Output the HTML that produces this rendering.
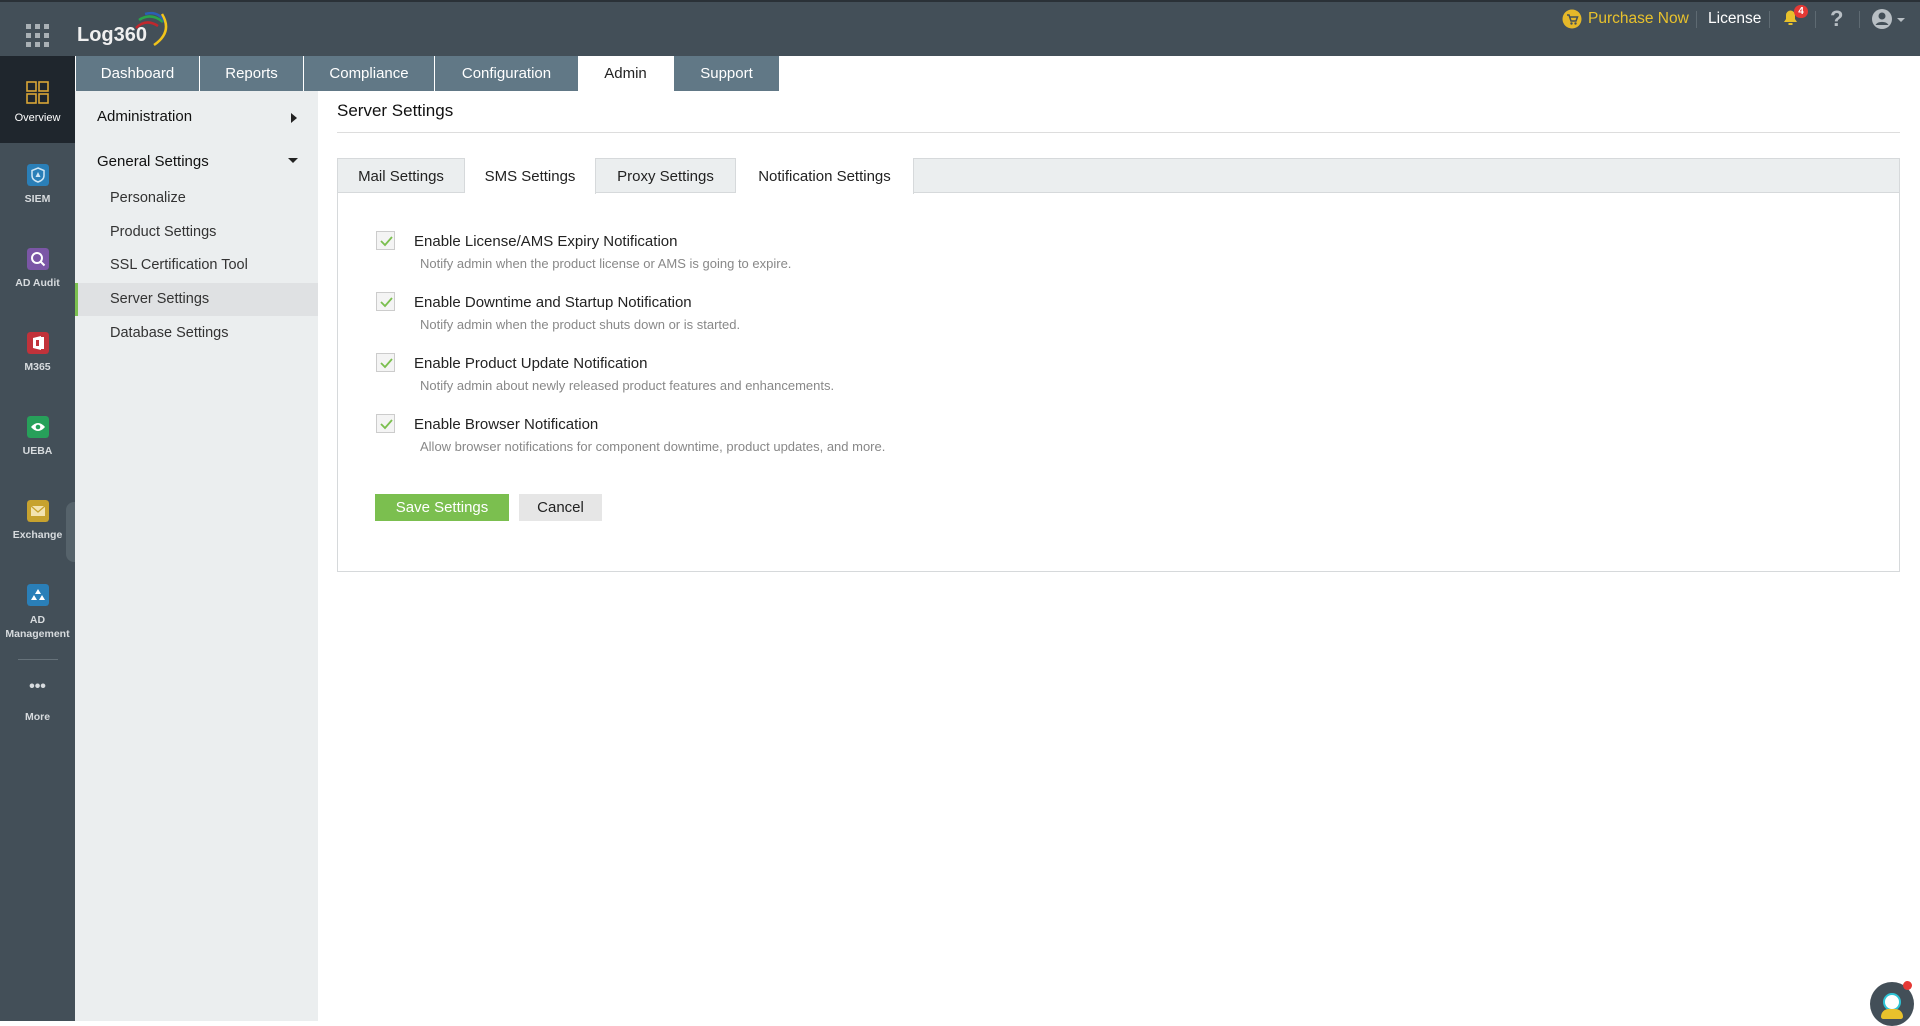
<!DOCTYPE html>
<html><head><meta charset="utf-8"><style>
*{box-sizing:border-box;margin:0;padding:0}
body{width:1920px;height:1021px;overflow:hidden;background:#fff;font-family:"Liberation Sans",sans-serif;position:relative}
.abs{position:absolute}
#hdr{left:0;top:0;width:1920px;height:56px;background:#434f58;border-top:2px solid #2a3137}
#rail{left:0;top:56px;width:75px;height:965px;background:#434f58}
#ov{left:0;top:56px;width:75px;height:87px;background:#1f262d}
.ri{position:absolute;left:0;width:75px;text-align:center;color:#d7dbde;font-size:10.5px;font-weight:bold}
.ri .ic{width:22px;height:22px;border-radius:3px;margin:0 auto 7px;display:block}
.tab{position:absolute;top:56px;height:35px;background:#617886;color:#fff;font-size:15px;line-height:35px;text-align:center}
#side{left:75px;top:91px;width:243px;height:930px;background:#ebeeef}
.sm{position:absolute;left:22px;font-size:15px;color:#111}
.ss{position:absolute;left:35px;font-size:14.5px;color:#333}
.ctab{position:absolute;top:158px;height:35px;font-size:15px;line-height:37px;text-align:center;color:#222;border-right:1px solid #d6d9db}
.cb{position:absolute;left:376px;width:19px;height:19px;border:1px solid #ccc;background:#f4f4f4}
.lbl{position:absolute;left:414px;font-size:15px;color:#222}
.dsc{position:absolute;left:420px;font-size:13px;color:#888}
</style></head><body>
<div id="hdr" class="abs"></div>
<svg class="abs" style="left:26px;top:24px" width="23" height="23"><g fill="#a9b0b5"><rect x="0" y="0" width="5" height="5"/><rect x="9" y="0" width="5" height="5"/><rect x="18" y="0" width="5" height="5"/><rect x="0" y="9" width="5" height="5"/><rect x="9" y="9" width="5" height="5"/><rect x="18" y="9" width="5" height="5"/><rect x="0" y="18" width="5" height="5"/><rect x="9" y="18" width="5" height="5"/><rect x="18" y="18" width="5" height="5"/></g></svg>
<div class="abs" style="left:77px;top:24px;color:#f0f0f0;font-size:20px;font-weight:bold">Log360</div>
<svg class="abs" style="left:130px;top:10px" width="42" height="38" fill="none" stroke-width="2.5"><path d="M6 18 Q16 8 28 16" stroke="#c0272d"/><path d="M9 10 Q21 2 33 12" stroke="#2aa34a"/><path d="M15 4 Q29 0 36 14" stroke="#2b5fb5"/><path d="M32 4 Q43 22 24 35" stroke="#f2c41a"/></svg>
<svg class="abs" style="left:1562px;top:9px" width="20" height="20"><circle cx="10" cy="10" r="9.5" fill="#e5b829"/><path d="M5 6h2l2 6h5l1.5-4H8" stroke="#434f58" stroke-width="1.5" fill="none"/><circle cx="9.5" cy="14.5" r="1.2" fill="#434f58"/><circle cx="13.5" cy="14.5" r="1.2" fill="#434f58"/></svg>
<div class="abs" style="left:1588px;top:10px;color:#e8c12c;font-size:15.5px">Purchase Now</div>
<div class="abs" style="left:1696px;top:11px;width:1px;height:17px;background:#5e6a72"></div>
<div class="abs" style="left:1708px;top:10px;color:#fff;font-size:15.5px">License</div>
<div class="abs" style="left:1769px;top:11px;width:1px;height:17px;background:#5e6a72"></div>
<svg class="abs" style="left:1781px;top:7px" width="22" height="20"><path d="M3 15h13l-2-3V8a4.5 4.5 0 0 0-9 0v4z" fill="#e8c12c"/><rect x="7.5" y="16" width="4" height="2" fill="#e8c12c"/></svg>
<div class="abs" style="left:1794px;top:5px;width:14px;height:13px;border-radius:7px;background:#e53935;color:#fff;font-size:10px;font-weight:bold;text-align:center;line-height:13px">4</div>
<div class="abs" style="left:1815px;top:11px;width:1px;height:17px;background:#5e6a72"></div>
<div class="abs" style="left:1830px;top:6px;color:#b8bfc4;font-size:22px;font-weight:bold">?</div>
<div class="abs" style="left:1859px;top:11px;width:1px;height:17px;background:#5e6a72"></div>
<svg class="abs" style="left:1871px;top:8px" width="40" height="22"><circle cx="11" cy="11" r="10" fill="#b8bfc4"/><circle cx="11" cy="8" r="3.5" fill="#434f58"/><path d="M4.5 17a7 5 0 0 1 13 0" fill="#434f58"/><path d="M26 10h8l-4 4z" fill="#b8bfc4"/></svg>

<div id="rail" class="abs"></div>
<div id="ov" class="abs"></div>
<svg class="abs" style="left:26px;top:81px" width="23" height="23" fill="none" stroke="#d9a536" stroke-width="1.6"><rect x="1" y="1" width="9" height="9"/><rect x="13" y="1" width="9" height="9"/><rect x="1" y="13" width="9" height="9"/><rect x="13" y="13" width="9" height="9"/></svg>
<div class="ri" style="top:112px;color:#fff;font-weight:normal;font-size:11px">Overview</div>
<div class="ri" style="top:164px"><svg class="ic" width="22" height="22"><rect width="22" height="22" rx="3" fill="#2a7fb8"/><path d="M11 4l6 2.5v5c0 3.5-3 5.5-6 6.5-3-1-6-3-6-6.5v-5z" fill="none" stroke="#cfe6f5" stroke-width="1.5"/><path d="M11 8l2.5 5h-5z" fill="#cfe6f5"/></svg>SIEM</div>
<div class="ri" style="top:248px"><svg class="ic" width="22" height="22"><rect width="22" height="22" rx="3" fill="#7b56a6"/><circle cx="10" cy="10" r="5" fill="none" stroke="#fff" stroke-width="2"/><path d="M13.5 13.5l4 4" stroke="#fff" stroke-width="2"/></svg>AD Audit</div>
<div class="ri" style="top:332px"><svg class="ic" width="22" height="22"><rect width="22" height="22" rx="3" fill="#c1323a"/><path d="M6 6l8-2v14l-8-2z M14 5h3v12h-3" fill="#fff"/><rect x="9" y="8" width="3" height="6" fill="#c1323a"/></svg>M365</div>
<div class="ri" style="top:416px"><svg class="ic" width="22" height="22"><rect width="22" height="22" rx="3" fill="#27a05a"/><path d="M4 11q7-8 14 0q-7 8-14 0z" fill="#fff"/><circle cx="11" cy="11" r="2.3" fill="#27a05a"/></svg>UEBA</div>
<div class="ri" style="top:500px"><svg class="ic" width="22" height="22"><rect width="22" height="22" rx="3" fill="#c7a22e"/><rect x="4" y="6" width="14" height="10" fill="#f3e3b0"/><path d="M4 6l7 6 7-6" fill="none" stroke="#c7a22e" stroke-width="1.3"/></svg>Exchange</div>
<div class="ri" style="top:584px;line-height:14px"><svg class="ic" width="22" height="22"><rect width="22" height="22" rx="3" fill="#2a7fb8"/><path d="M11 5l3 5h-6z M7 11l3 5H4z M15 11l3 5h-6z" fill="#fff"/></svg>AD<br>Management</div>
<div class="abs" style="left:18px;top:659px;width:40px;height:1px;background:#66727a"></div>
<div class="ri" style="top:682px;font-size:16px;line-height:10px">•••</div>
<div class="ri" style="top:711px">More</div>
<div class="abs" style="left:66px;top:502px;width:9px;height:60px;background:#56636b;border-radius:8px 0 0 8px"></div>

<div class="tab" style="left:76px;width:123px">Dashboard</div>
<div class="tab" style="left:200px;width:103px">Reports</div>
<div class="tab" style="left:304px;width:130px">Compliance</div>
<div class="tab" style="left:435px;width:143px">Configuration</div>
<div class="tab" style="left:578px;width:95px;background:#fff;color:#222">Admin</div>
<div class="tab" style="left:674px;width:105px">Support</div>

<div id="side" class="abs">
<div class="sm" style="top:17px">Administration</div>
<div class="abs" style="left:216px;top:22px;border-left:6px solid #222;border-top:5px solid transparent;border-bottom:5px solid transparent"></div>
<div class="sm" style="top:62px">General Settings</div>
<div class="abs" style="left:213px;top:67px;border-top:5px solid #222;border-left:5px solid transparent;border-right:5px solid transparent"></div>
<div class="ss" style="top:99px">Personalize</div>
<div class="ss" style="top:133px">Product Settings</div>
<div class="ss" style="top:166px">SSL Certification Tool</div>
<div class="abs" style="left:0;top:192px;width:243px;height:33px;background:#dfe1e3;border-left:3px solid #7bbf4f"></div>
<div class="ss" style="top:200px">Server Settings</div>
<div class="ss" style="top:234px">Database Settings</div>
</div>

<div class="abs" style="left:337px;top:101px;font-size:17px;color:#111">Server Settings</div>
<div class="abs" style="left:337px;top:132px;width:1563px;height:1px;background:#ddd"></div>
<div class="abs" style="left:337px;top:158px;width:1563px;height:414px;border:1px solid #d6d9db"></div>
<div class="abs" style="left:337px;top:158px;width:1563px;height:35px;background:#ebeeef;border:1px solid #d6d9db"></div>
<div class="ctab" style="left:338px;width:127px">Mail Settings</div>
<div class="ctab" style="left:465px;width:131px;background:#fff;height:36px">SMS Settings</div>
<div class="ctab" style="left:596px;width:140px">Proxy Settings</div>
<div class="ctab" style="left:736px;width:178px;background:#fff;height:36px">Notification Settings</div>

<svg width="0" height="0" style="position:absolute"><defs><path id="ck" d="M4 9l4 4 7-8" fill="none" stroke="#7bbf4f" stroke-width="1.8"/></defs></svg>
<div class="cb" style="top:231px"><svg width="19" height="19"><use href="#ck"/></svg></div>
<div class="lbl" style="top:233px">Enable License/AMS Expiry Notification</div>
<div class="dsc" style="top:256px">Notify admin when the product license or AMS is going to expire.</div>
<div class="cb" style="top:292px"><svg width="19" height="19"><use href="#ck"/></svg></div>
<div class="lbl" style="top:294px">Enable Downtime and Startup Notification</div>
<div class="dsc" style="top:317px">Notify admin when the product shuts down or is started.</div>
<div class="cb" style="top:353px"><svg width="19" height="19"><use href="#ck"/></svg></div>
<div class="lbl" style="top:355px">Enable Product Update Notification</div>
<div class="dsc" style="top:378px">Notify admin about newly released product features and enhancements.</div>
<div class="cb" style="top:414px"><svg width="19" height="19"><use href="#ck"/></svg></div>
<div class="lbl" style="top:416px">Enable Browser Notification</div>
<div class="dsc" style="top:439px">Allow browser notifications for component downtime, product updates, and more.</div>

<div class="abs" style="left:375px;top:494px;width:134px;height:27px;background:#7bbf4f;color:#fff;font-size:15px;text-align:center;line-height:28px">Save Settings</div>
<div class="abs" style="left:519px;top:494px;width:83px;height:27px;background:#e6e6e6;color:#222;font-size:15px;text-align:center;line-height:28px">Cancel</div>

<div class="abs" style="left:1870px;top:982px;width:44px;height:44px;border-radius:22px;background:#434f58"></div>
<div class="abs" style="left:1883px;top:993px;width:18px;height:18px;border-radius:9px;border:2px solid #2ec4d6;background:#fff"></div>
<div class="abs" style="left:1881px;top:1009px;width:22px;height:10px;border-radius:10px 10px 3px 3px;background:#e8c12c"></div>
<div class="abs" style="left:1903px;top:981px;width:9px;height:9px;border-radius:5px;background:#e53935"></div>
</body></html>
